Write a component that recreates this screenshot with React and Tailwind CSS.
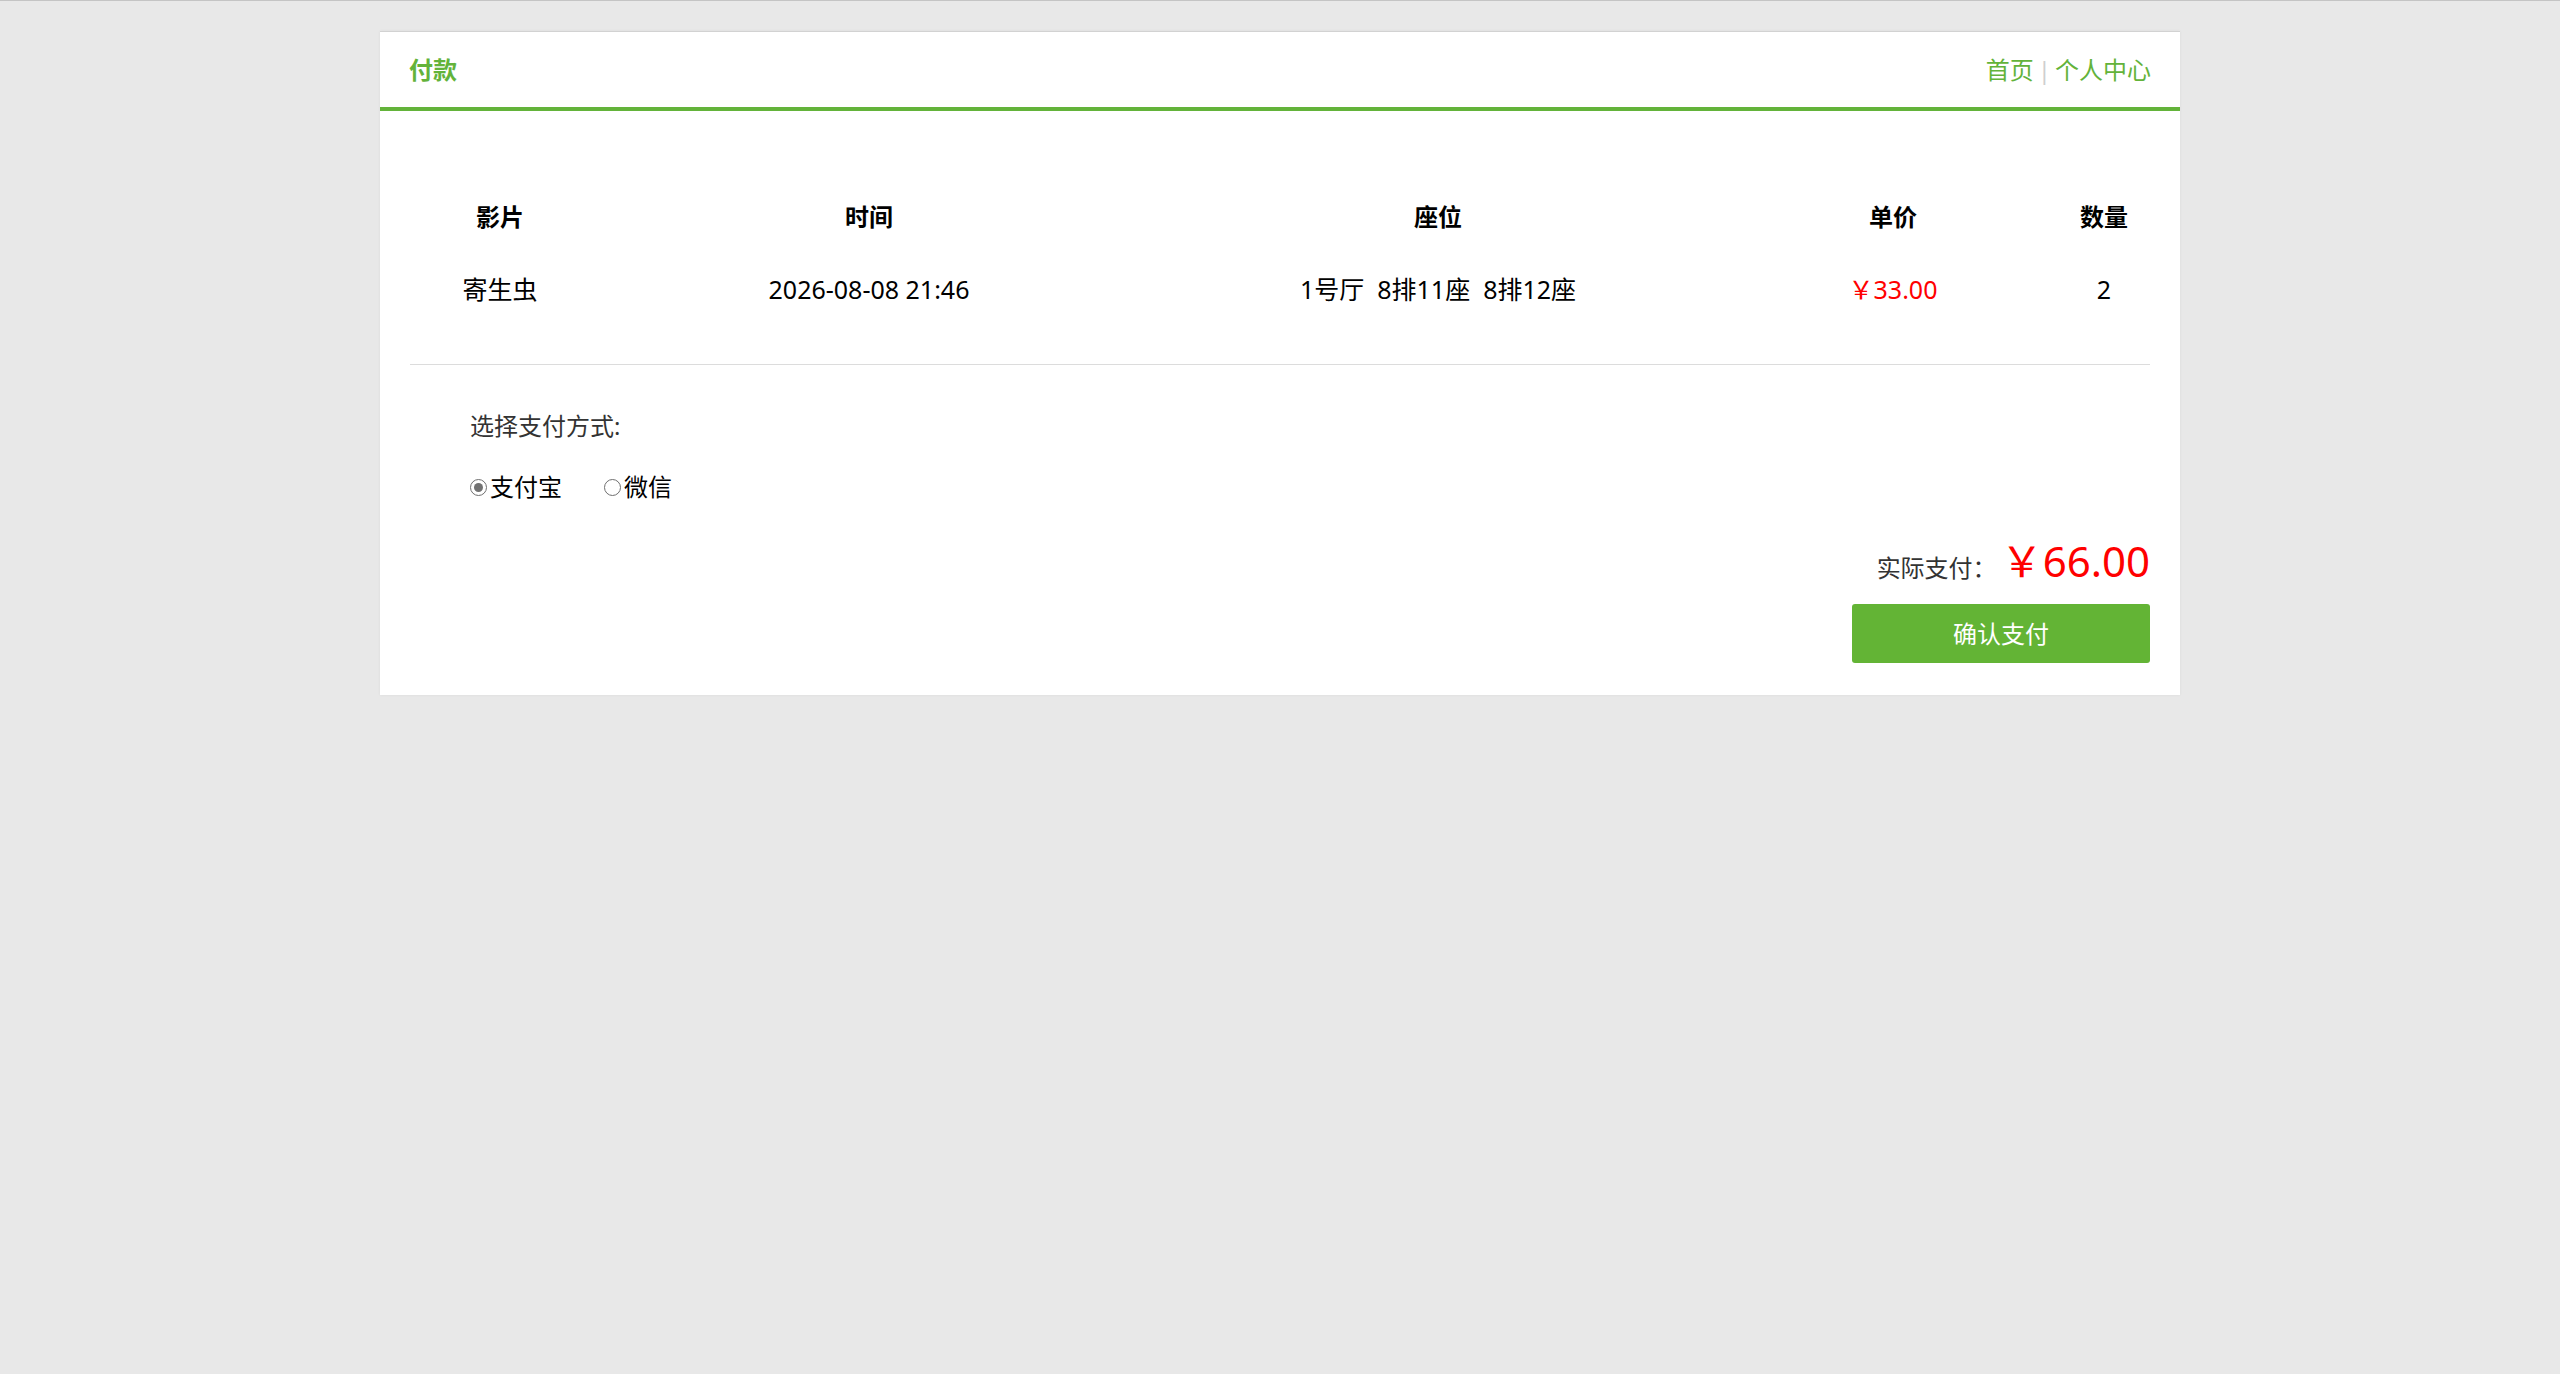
import { useState } from "react"

const font = { fontFamily: '"Noto Sans", "Noto Sans CJK SC", sans-serif' }

const order = {
    movie: "寄生虫",
    time: "2026-08-08 21:46",
    seats: "1号厅\u00a0\u00a08排11座\u00a0\u00a08排12座",
    price: "33.00",
    count: 2,
}

const Radio = ({ checked, label, onClick }) => (
    <button
        type="button"
        onClick={onClick}
        className="flex items-center text-[24px] leading-[38px] text-black"
    >
        <span className="mr-[3px] flex h-[17px] w-[17px] items-center justify-center rounded-full border-[1.5px] border-[#6f6f6f] bg-white">
            {checked && <span className="h-[9px] w-[9px] rounded-full bg-[#727272]" />}
        </span>
        {label}
    </button>
)

export default function App() {
    const [pay, setPay] = useState("alipay")
    const total = (Number(order.price) * order.count).toFixed(2)

    return (
        <div className="min-h-screen border-t border-[#c4c4c4] bg-[#e8e8e8] pt-[30px]" style={font}>
            <div className="mx-auto w-[1800px] border-t border-[#d2d2d2] bg-white shadow-[0_0_3px_rgba(0,0,0,0.06)]">
                {/* 标题栏 */}
                <div className="flex h-[79px] items-center justify-between border-b-4 border-[#63b33a] pl-[29px] pr-[29px]">
                    <span className="text-[24px] font-bold text-[#63b33a]">付款</span>
                    <div className="flex items-center text-[24px] text-[#63b33a]">
                        <a href="#">首页</a>
                        <span className="mx-[4px] text-[#cfcfcf]">|</span>
                        <a href="#">个人中心</a>
                    </div>
                </div>

                {/* 订单信息 */}
                <div className="mx-[30px] border-b border-[#dcdcdc] pb-[38px] pt-[69px] text-black">
                    <div className="grid h-[73px] grid-cols-[180px_558px_580px_330px_92px] items-center text-center text-[24px] font-bold">
                        <div>影片</div>
                        <div>时间</div>
                        <div>座位</div>
                        <div>单价</div>
                        <div>数量</div>
                    </div>
                    <div className="grid h-[73px] grid-cols-[180px_558px_580px_330px_92px] items-center text-center text-[25px]">
                        <div>{order.movie}</div>
                        <div>{order.time}</div>
                        <div>{order.seats}</div>
                        <div className="text-[#ff0000]">￥{order.price}</div>
                        <div>{order.count}</div>
                    </div>
                </div>

                {/* 支付方式 */}
                <div className="px-[30px] pb-[32px]">
                    <div className="pl-[60px] pt-[42px]">
                        <div className="text-[24px] leading-[38px] text-[#333]">选择支付方式:</div>
                        <div className="mt-[23px] flex items-center gap-[42px]">
                            <Radio checked={pay === "alipay"} label="支付宝" onClick={() => setPay("alipay")} />
                            <Radio checked={pay === "wechat"} label="微信" onClick={() => setPay("wechat")} />
                        </div>
                    </div>

                    <div className="mt-[23px] flex items-baseline justify-end gap-[4px]">
                        <span className="text-[24px] text-[#333]">实际支付：</span>
                        <span className="text-[42px] text-[#ff0000]">￥{total}</span>
                    </div>
                    <div className="mt-[12px] flex justify-end">
                        <button
                            type="button"
                            className="h-[59px] w-[298px] rounded-[3px] bg-[#63b435] text-[24px] text-white"
                        >
                            确认支付
                        </button>
                    </div>
                </div>
            </div>
        </div>
    )
}
